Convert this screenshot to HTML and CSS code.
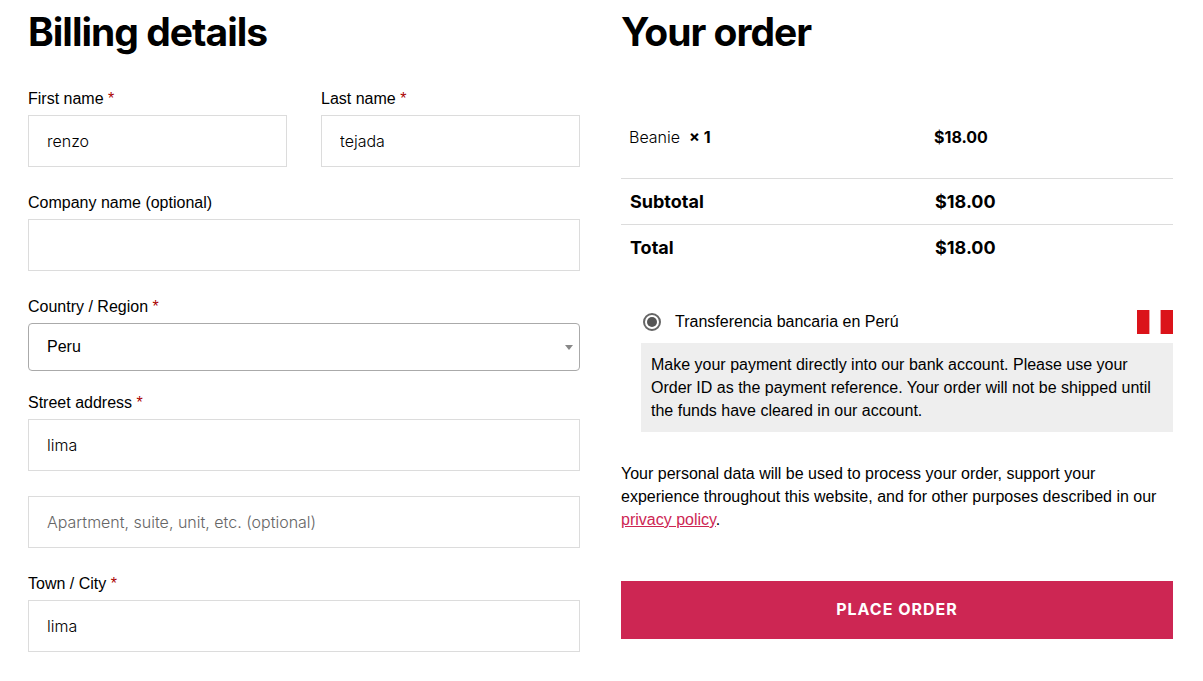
FILE: index.html
```html
<!DOCTYPE html>
<html lang="en">
<head>
<meta charset="utf-8">
<title>Checkout</title>
<link rel="stylesheet" href="styles.css">
</head>
<body>
<form class="checkout">
  <section class="billing">
    <h2 class="heading">Billing details</h2>
    <div class="fields">
      <div class="row">
        <div class="field">
          <label for="first">First name <span class="required">*</span></label>
          <input class="control" id="first" type="text" value="renzo">
        </div>
        <div class="field">
          <label for="last">Last name <span class="required">*</span></label>
          <input class="control" id="last" type="text" value="tejada">
        </div>
      </div>
      <div class="field">
        <label for="company">Company name (optional)</label>
        <input class="control" id="company" type="text">
      </div>
      <div class="field">
        <label for="country">Country / Region <span class="required">*</span></label>
        <div class="select-wrap">
          <select class="country" id="country"><option>Peru</option></select>
        </div>
      </div>
      <div class="field">
        <label for="street">Street address <span class="required">*</span></label>
        <input class="control" id="street" type="text" value="lima">
      </div>
      <div class="field">
        <input class="control" type="text" aria-label="Apartment" placeholder="Apartment, suite, unit, etc. (optional)">
      </div>
      <div class="field">
        <label for="city">Town / City <span class="required">*</span></label>
        <input class="control" id="city" type="text" value="lima">
      </div>
    </div>
  </section>
  <section class="order">
    <h2 class="heading">Your order</h2>
    <table class="review">
      <tbody>
        <tr class="item"><td>Beanie&nbsp; <strong>× 1</strong></td><td><strong>$18.00</strong></td></tr>
      </tbody>
      <tfoot>
        <tr class="sum"><th scope="row">Subtotal</th><td>$18.00</td></tr>
        <tr class="sum"><th scope="row">Total</th><td>$18.00</td></tr>
      </tfoot>
    </table>
    <div class="payment">
      <div class="method">
        <input class="radio" id="bank" type="radio" name="payment" checked>
        <label for="bank">Transferencia bancaria en Perú</label>
        <svg class="flag" viewBox="0 0 36 24" aria-hidden="true"><path fill="#f0a0a5" d="M12 0h1v24h-1zM23 0h1v24h-1z"/><path fill="#db131a" d="M0 0h12v24H0zM24 0h12v24H24z"/></svg>
      </div>
      <p class="method-note">Make your payment directly into our bank account. Please use your Order ID as the payment reference. Your order will not be shipped until the funds have cleared in our account.</p>
    </div>
    <p class="privacy">Your personal data will be used to process your order, support your experience throughout this website, and for other purposes described in our <a href="#">privacy policy</a>.</p>
    <button class="place-order" type="button">PLACE ORDER</button>
  </section>
</form>
</body>
</html>
```
FILE: styles.css
```css
* { box-sizing: border-box; }
body {
  margin: 0;
  background: #fff;
  color: #000;
  font: 16px/23px "Liberation Sans", Arial, sans-serif;
}
.checkout {
  display: grid;
  grid-template-columns: 1fr 1fr;
  gap: 41px;
  padding: 8px 30px 29px 28px;
}
.heading {
  margin: 0;
  font: 700 39px/48px Inter, sans-serif;
  letter-spacing: -1px;
}
.fields {
  display: flex;
  flex-direction: column;
  gap: 25px;
  margin-top: 32px;
}
.row {
  display: grid;
  grid-template-columns: 1fr 1fr;
  gap: 34px;
}
.field { display: flex; flex-direction: column; }
.field label { height: 27px; line-height: 22px; }
.required { color: #a00; }
.control {
  width: 100%;
  height: 52px;
  padding: 0 18px;
  border: 1px solid #dcdcdc;
  border-radius: 0;
  background: #fff;
  color: #000;
  font: 300 16px/24px Inter, sans-serif;
}
.control::placeholder { color: #666; opacity: 1; }
.select-wrap { position: relative; margin-bottom: -4px; }
.select-wrap::after {
  content: "";
  position: absolute;
  top: 22px;
  right: 7px;
  border: 4px solid transparent;
  border-top: 5px solid #888;
  border-bottom: 0;
  pointer-events: none;
}
.country {
  appearance: none;
  display: block;
  width: 100%;
  height: 48px;
  padding: 0 18px;
  border: 1px solid #aaa;
  border-radius: 4px;
  background: #fff;
  color: #000;
  font: 16px/24px "Liberation Sans", Arial, sans-serif;
}
.review {
  width: 100%;
  margin-top: 40px;
  border-collapse: collapse;
  table-layout: fixed;
  font-family: Inter, sans-serif;
}
.review th, .review td { text-align: left; }
.item td {
  height: 82px;
  padding: 2px 8px 0;
  font-size: 16px;
  font-weight: 300;
}
.review strong { font-weight: 700; }
.review .sum th, .review .sum td {
  height: 46px;
  padding: 0 9px;
  border-top: 1px solid #dcdcdc;
  font-size: 18px;
  font-weight: 700;
}
.review th:first-child, .review td:first-child { width: 305px; }
.payment { margin: 40px 0 0 20px; }
.method { display: flex; align-items: center; height: 24px; }
.method label { line-height: 24px; }
.radio {
  appearance: none;
  width: 18px;
  height: 18px;
  margin: 0 14px 0 2px;
  padding: 2px;
  border: 2px solid #666;
  border-radius: 50%;
  background: #555 content-box;
}
.flag { width: 36px; height: 24px; margin-left: auto; }
.method-note {
  margin: 9px 0 0;
  padding: 10px;
  background: #eee;
}
.privacy { margin: 30px 0 0; }
.privacy a { color: #cd2653; }
.place-order {
  display: block;
  width: 100%;
  height: 58px;
  margin-top: 50px;
  padding: 0 0 2px;
  border: 0;
  background: #cd2653;
  color: #fff;
  font: 700 16px/24px Inter, sans-serif;
  letter-spacing: 1px;
}
```
